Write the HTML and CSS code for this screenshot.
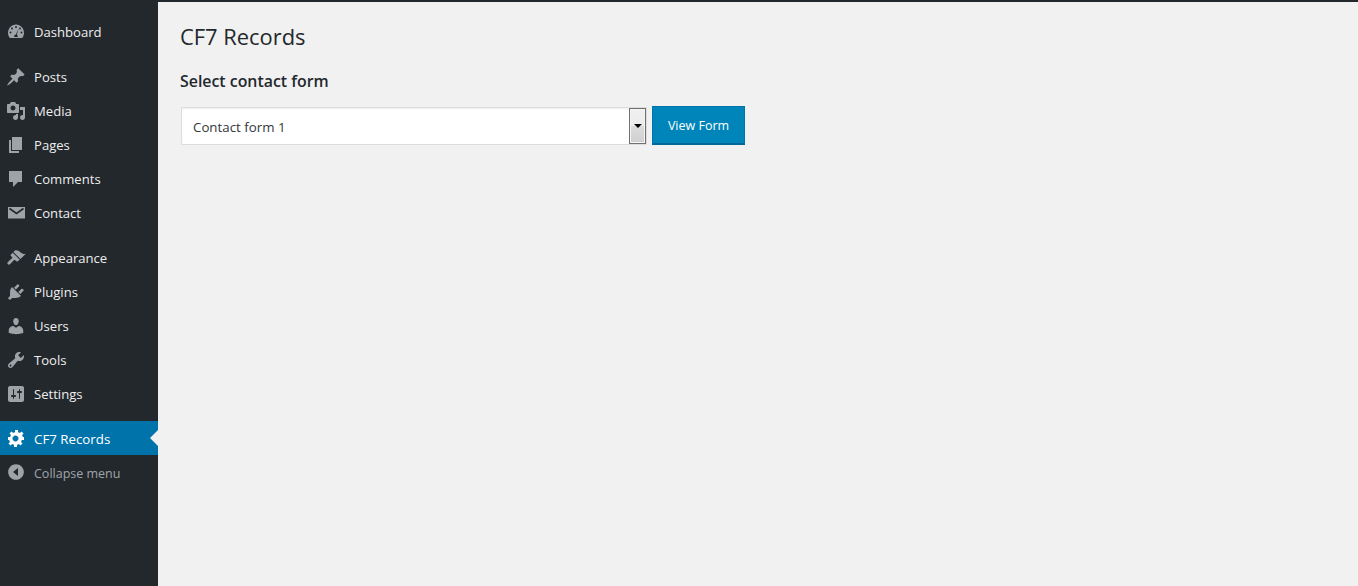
FILE: index.html
```html
<!DOCTYPE html>
<html lang="en">
<head>
<meta charset="utf-8">
<title>CF7 Records</title>
<link rel="stylesheet" href="styles.css">
</head>
<body>
<div class="app">
  <nav class="sidebar">
    <ul class="menu">
      <li class="item"><svg class="icon" viewBox="0 0 20 20"><path d="M3.76 16h12.48c1.1-1.43 1.76-3.21 1.76-5.14 0-4.64-3.58-8.4-8-8.4s-8 3.76-8 8.4c0 1.93.66 3.71 1.76 5.14z"/><g class="cut"><circle cx="10" cy="5" r="1"/><circle cx="6" cy="6.5" r="1"/><circle cx="14" cy="6.500" r="1"/><circle cx="4.500" cy="10.500" r="1"/><circle cx="15.500" cy="10.500" r="1"/><path d="M12.500 6.500l-1.700 6.200c.6.300 1 .9 1 1.600 0 .3-.1.500-.2.700H8.400c-.1-.2-.2-.4-.2-.7 0-1 .8-1.800 1.700-1.800z"/></g></svg><span>Dashboard</span></li>
      <li class="sep"></li>
      <li class="item"><svg class="icon" viewBox="0 0 20 20"><path d="M10.44 3.02l1.82-1.82 6.36 6.35-1.83 1.82c-1.05-.68-2.48-.57-3.41.36l-.75.75c-.92.93-1.04 2.35-.35 3.41l-1.83 1.82-2.41-2.41-2.8 2.79c-.42.42-3.38 2.71-3.8 2.29s1.86-3.39 2.28-3.81l2.79-2.79L4.1 9.36l1.83-1.82c1.05.69 2.48.57 3.4-.36l.75-.75c.93-.92 1.05-2.35.36-3.41z"/></svg><span>Posts</span></li>
      <li class="item"><svg class="icon" viewBox="0 0 20 20"><path d="M13 11V4c0-.55-.45-1-1-1h-1.670L9 1H5L3.670 3H2c-.55 0-1 .45-1 1v7c0 .55.45 1 1 1h10c.55 0 1-.45 1-1zM7 4.500c1.380 0 2.500 1.120 2.500 2.500S8.380 9.500 7 9.500 4.500 8.380 4.500 7 5.620 4.500 7 4.500zM14 6h5v10.500c0 1.380-1.120 2.500-2.500 2.500S14 17.880 14 16.500s1.120-2.500 2.500-2.500c.17 0 .34.02.5.050V9h-3V6zm-4 8.050V13h2v3.500c0 1.380-1.120 2.500-2.500 2.500S7 17.880 7 16.500 8.120 14 9.500 14c.17 0 .34.02.5.050z"/></svg><span>Media</span></li>
      <li class="item"><svg class="icon" viewBox="0 0 20 20"><path d="M6 15V2h10v13H6zm-1 1h8v2H3V5h2v11z"/></svg><span>Pages</span></li>
      <li class="item"><svg class="icon" viewBox="0 0 20 20"><path d="M3 2h13v11h-4l-5 5v-5H3z"/></svg><span>Comments</span></li>
      <li class="item"><svg class="icon" viewBox="0 0 20 20"><path d="M2 4h17v11.500H2z"/><path class="cut-line" d="M3.500 5.500l7 5 7-5"/></svg><span>Contact</span></li>
      <li class="sep"></li>
      <li class="item"><svg class="icon" viewBox="0 0 20 20"><path d="M14.480 11.060L7.410 3.990l1.500-1.500c.5-.56 2.300-.47 3.510.32 1.210.8 1.430 1.280 2.910 2.100 1.180.64 2.450 1.260 4.450.85zM13.770 11.770L6.700 4.700 4.930 6.470c-.39.39-.39 1.020 0 1.410l1.060 1.060c.39.39.39 1.030 0 1.420-.6.6-3.400 3.100-4.180 3.880-.59.59-.59 1.530 0 2.120s1.530.59 2.120 0c.78-.78 3.280-3.580 3.880-4.180.39-.39 1.030-.39 1.420 0l1.060 1.060c.39.39 1.020.39 1.410 0z"/></svg><span>Appearance</span></li>
      <li class="item"><svg class="icon" viewBox="0 0 20 20"><path d="M13.110 4.360L9.870 7.600 8 5.730l3.240-3.240c.35-.34 1.050-.2 1.560.32.52.51.66 1.210.31 1.550zm-8 1.770l.91-1.120 9.010 9.010-1.190.84c-.71.71-2.630 1.160-3.820 1.160H6.140L4.900 17.260c-.59.59-1.540.59-2.120 0-.59-.58-.59-1.530 0-2.120l1.240-1.240v-3.880c0-1.130.4-3.190 1.090-3.890zm7.260 3.970l3.240-3.240c.34-.35 1.040-.21 1.550.31.52.51.66 1.210.31 1.550l-3.240 3.250z"/></svg><span>Plugins</span></li>
      <li class="item"><svg class="icon" viewBox="0 0 20 20"><path d="M10 9.250c-2.270 0-2.730-3.440-2.730-3.440C7 4.020 7.820 2 9.970 2c2.160 0 2.980 2.020 2.710 3.810 0 0-.41 3.440-2.680 3.440zm0 2.570L12.720 10c2.390 0 4.520 2.330 4.520 4.530v2.490s-3.650 1.130-7.240 1.130c-3.650 0-7.240-1.130-7.240-1.130v-2.490c0-2.250 1.940-4.480 4.470-4.480z"/></svg><span>Users</span></li>
      <li class="item"><svg class="icon" viewBox="0 0 20 20"><path d="M16.680 9.770c-1.340 1.340-3.300 1.670-4.950.99l-5.410 6.520c-.99.99-2.590.99-3.580 0s-.99-2.590 0-3.570l6.520-5.420c-.68-1.650-.35-3.610.99-4.950 1.280-1.280 3.120-1.620 4.720-1.060l-2.890 2.890 2.820 2.820 2.860-2.870c.53 1.580.18 3.390-1.080 4.650zM3.810 16.210c.4.39 1.040.39 1.430 0 .4-.4.4-1.040 0-1.430-.39-.4-1.030-.4-1.430 0-.39.39-.39 1.030 0 1.430z"/></svg><span>Tools</span></li>
      <li class="item"><svg class="icon" viewBox="0 0 20 20"><path d="M18 16V4c0-1.100-.9-2-2-2H4c-1.100 0-2 .9-2 2v12c0 1.100.9 2 2 2h12c1.100 0 2-.9 2-2zM8 11h1c.55 0 1 .45 1 1s-.45 1-1 1H8v1.500c0 .28-.22.5-.5.5s-.5-.22-.5-.5V13H6c-.55 0-1-.45-1-1s.45-1 1-1h1V5.500c0-.28.22-.5.5-.5s.5.22.5.5V11zm5-2h-1c-.55 0-1-.45-1-1s.45-1 1-1h1V5.500c0-.28.22-.5.5-.5s.5.22.5.5V7h1c.55 0 1 .45 1 1s-.45 1-1 1h-1v5.500c0 .28-.22.5-.5.5s-.5-.22-.5-.5V9z"/></svg><span>Settings</span></li>
      <li class="sep sep-last"></li>
      <li class="item current"><svg class="icon" viewBox="0 0 20 20"><path d="M18 12h-2.180c-.17.7-.44 1.350-.81 1.930l1.540 1.540-2.100 2.100-1.540-1.540c-.58.36-1.230.64-1.910.81V19H8v-2.180c-.68-.17-1.330-.45-1.910-.81l-1.540 1.540-2.120-2.120 1.540-1.540c-.36-.58-.64-1.230-.81-1.930H2V9h2.180c.17-.7.45-1.350.81-1.940L3.450 5.520l2.120-2.120 1.540 1.540c.58-.36 1.230-.64 1.910-.81V2h3v2.180c.68.17 1.330.45 1.910.81l1.540-1.540 2.120 2.120-1.540 1.540c.36.59.64 1.240.81 1.940H18v3zm-8.500 1.500c1.660 0 3-1.340 3-3s-1.340-3-3-3-3 1.340-3 3 1.340 3 3 3z"/></svg><span>CF7 Records</span></li>
      <li class="item collapse"><svg class="icon" viewBox="0 0 20 20"><path d="M10 2.160c4.330 0 7.840 3.510 7.840 7.840s-3.510 7.840-7.840 7.840-7.840-3.510-7.840-7.840S5.670 2.160 10 2.160zm2 11.840V6l-5 4z"/></svg><span>Collapse menu</span></li>
    </ul>
  </nav>
  <main class="content">
    <h1 class="title">CF7 Records</h1>
    <h2 class="subtitle">Select contact form</h2>
    <form class="form-row">
      <div class="select-wrap">
        <select class="select"><option>Contact form 1</option></select>
        <span class="select-button"><span class="arrow"></span></span>
      </div>
      <button class="button" type="button">View Form</button>
    </form>
  </main>
</div>
</body>
</html>
```
FILE: styles.css
```css
* { box-sizing: border-box; }
html, body { margin: 0; height: 100%; }
body {
  background: #f1f1f1;
  color: #23282d;
  font-family: "Open Sans", "Noto Sans", sans-serif;
  font-size: 13px;
  overflow: hidden;
}
.app {
  display: flex;
  height: 586px;
  border-top: 2px solid #23282d;
}
.sidebar {
  width: 158px;
  flex: none;
  background: #23282d;
}
.menu {
  list-style: none;
  margin: 0;
  padding: 13px 0 0;
}
.item {
  display: flex;
  align-items: center;
  height: 34px;
  padding-left: 6px;
  color: #eee;
  font-size: 13.100px;
  position: relative;
}
.item span { margin-left: 8px; }
.icon {
  width: 20px;
  height: 20px;
  flex: none;
  fill: #9ea3a8;
}
.cut { fill: #23282d; }
.cut-line {
  fill: none;
  stroke: #23282d;
  stroke-width: 1.600px;
}
.sep { height: 11px; }
.sep-last { height: 10px; }
.current {
  background: #0073aa;
  color: #fff;
  font-size: 13.300px;
}
.current span, .collapse span { padding-top: 2px; }
.current .icon { fill: #fff; }
.current::after {
  content: "";
  position: absolute;
  right: 0;
  top: 9px;
  border: 8px solid transparent;
  border-right-color: #f1f1f1;
  border-left-width: 0;
}
.collapse {
  color: #a0a5aa;
  font-size: 12.500px;
}
.content {
  flex: 1;
  padding: 0 22px;
}
.title {
  margin: 20px 0 0;
  font-size: 21.900px;
  font-weight: 400;
  line-height: 29px;
  color: #23282d;
}
.subtitle {
  margin: 19px 0 0;
  font-size: 15.900px;
  font-weight: 600;
  line-height: 22px;
  color: #23282d;
}
.form-row {
  display: flex;
  align-items: flex-start;
  margin: 14px 0 0 1px;
}
.select-wrap {
  position: relative;
  width: 466px;
  height: 38px;
  margin-top: 1px;
}
.select {
  display: block;
  width: 100%;
  height: 100%;
  appearance: none;
  background: #fff;
  border: 1px solid #ddd;
  border-radius: 0;
  padding: 2px 11px 0;
  font: 13.300px "Open Sans", "Noto Sans", sans-serif;
  color: #32373c;
  box-shadow: inset 0 1px 2px rgba(0,0,0,.07);
}
.select-button {
  position: absolute;
  top: 1px;
  right: 1px;
  width: 17px;
  height: 36px;
  border: 1px solid #707070;
  box-shadow: inset 0 0 0 1px #f4f4f4;
  background: linear-gradient(#f0f0f0, #ececec 50%, #dcdcdc 50%, #cfcfcf);
  display: flex;
  align-items: center;
  justify-content: center;
}
.arrow {
  border: 4px solid transparent;
  border-top-color: #000;
  border-bottom-width: 0;
}
.button {
  width: 93px;
  height: 39px;
  margin-left: 5px;
  background: #0085ba;
  border: 1px solid #0073aa;
  border-bottom: 2px solid #006799;
  border-radius: 0;
  color: #fff;
  font: 12.500px "Open Sans", "Noto Sans", sans-serif;
  padding: 0;
}
```
